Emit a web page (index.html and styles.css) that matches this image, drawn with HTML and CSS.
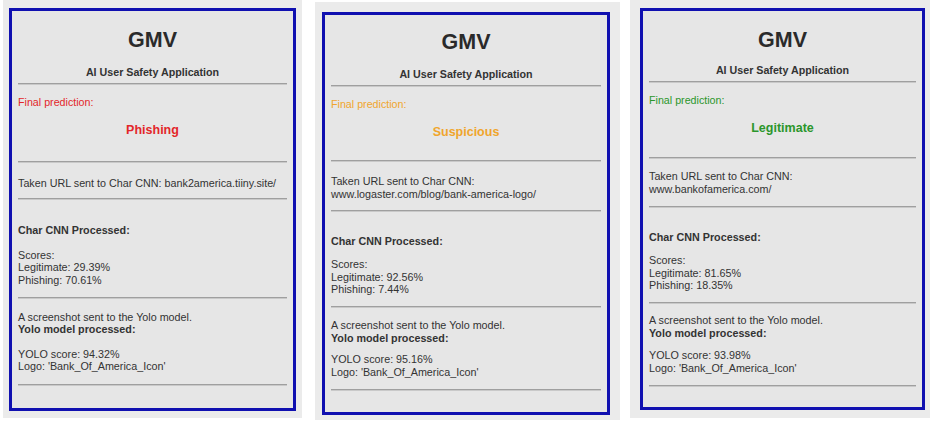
FILE: index.html
```html
<!DOCTYPE html>
<html lang="en">
<head>
<meta charset="utf-8">
<title>GMV - AI User Safety Application</title>
<link rel="stylesheet" href="styles.css">
</head>
<body>
<div class="strip">
  <section class="shot shot-1">
    <div class="card">
      <h1 class="title">GMV</h1>
      <h2 class="subtitle">AI User Safety Application</h2>
      <div class="rule"></div>
      <p class="label red">Final prediction:</p>
      <p class="verdict red">Phishing</p>
      <div class="rule rule-after-verdict"></div>
      <p class="text url">Taken URL sent to Char CNN: bank2america.tiiny.site/</p>
      <div class="rule rule-after-url"></div>
      <p class="text strong section-head">Char CNN Processed:</p>
      <p class="text scores">Scores:<br>Legitimate: 29.39%<br>Phishing: 70.61%</p>
      <div class="rule rule-after-scores"></div>
      <p class="text sent">A screenshot sent to the Yolo model.<br><b>Yolo model processed:</b></p>
      <p class="text yolo">YOLO score: 94.32%<br>Logo: 'Bank_Of_America_Icon'</p>
      <div class="rule rule-end"></div>
    </div>
  </section>

  <section class="shot shot-2">
    <div class="card">
      <h1 class="title">GMV</h1>
      <h2 class="subtitle">AI User Safety Application</h2>
      <div class="rule"></div>
      <p class="label orange">Final prediction:</p>
      <p class="verdict orange">Suspicious</p>
      <div class="rule rule-after-verdict"></div>
      <p class="text url">Taken URL sent to Char CNN:<br>www.logaster.com/blog/bank-america-logo/</p>
      <div class="rule rule-after-url"></div>
      <p class="text strong section-head">Char CNN Processed:</p>
      <p class="text scores">Scores:<br>Legitimate: 92.56%<br>Phishing: 7.44%</p>
      <div class="rule rule-after-scores"></div>
      <p class="text sent">A screenshot sent to the Yolo model.<br><b>Yolo model processed:</b></p>
      <p class="text yolo">YOLO score: 95.16%<br>Logo: 'Bank_Of_America_Icon'</p>
      <div class="rule rule-end"></div>
    </div>
  </section>

  <section class="shot shot-3">
    <div class="card">
      <h1 class="title">GMV</h1>
      <h2 class="subtitle">AI User Safety Application</h2>
      <div class="rule"></div>
      <p class="label green">Final prediction:</p>
      <p class="verdict green">Legitimate</p>
      <div class="rule rule-after-verdict"></div>
      <p class="text url">Taken URL sent to Char CNN:<br>www.bankofamerica.com/</p>
      <div class="rule rule-after-url"></div>
      <p class="text strong section-head">Char CNN Processed:</p>
      <p class="text scores">Scores:<br>Legitimate: 81.65%<br>Phishing: 18.35%</p>
      <div class="rule rule-after-scores"></div>
      <p class="text sent">A screenshot sent to the Yolo model.<br><b>Yolo model processed:</b></p>
      <p class="text yolo">YOLO score: 93.98%<br>Logo: 'Bank_Of_America_Icon'</p>
      <div class="rule rule-end"></div>
    </div>
  </section>
</div>
</body>
</html>
```

FILE: styles.css
```css
* {
  box-sizing: border-box;
}

html, body {
  margin: 0;
  padding: 0;
  background: #ffffff;
}

body {
  width: 936px;
  height: 427px;
  overflow: hidden;
  font-family: "Liberation Sans", Arial, Helvetica, sans-serif;
  color: #333333;
}

.strip {
  display: flex;
  align-items: flex-start;
}

.shot {
  background: #ebebeb;
  height: 418px;
  --title-top: 17px;
  --subtitle-top: 13px;
  --label-top: 11px;
  --verdict-top: 14px;
  --after-verdict: 23px;
  --url-top: 14px;
  --after-url: 8.5px;
  --head-top: 24px;
  --scores-top: 12px;
  --after-scores: 10.5px;
  --sent-top: 12px;
  --yolo-top: 12px;
  --end-top: 11px;
}

.shot-1 {
  margin-left: 3px;
  width: 299px;
  padding: 8px 0 0 6px;
}

.shot-2 {
  margin-left: 13px;
  margin-top: 2px;
  width: 305px;
  padding: 10px 0 0 7px;
  --title-top: 15px;
  --after-verdict: 20px;
  --url-top: 13px;
  --after-url: 9.5px;
  --head-top: 23px;
  --scores-top: 11px;
  --after-scores: 10.5px;
  --sent-top: 11px;
  --yolo-top: 9px;
  --end-top: 11px;
}

.shot-3 {
  margin-left: 10px;
  width: 300px;
  padding: 8px 0 0 10px;
  --subtitle-top: 11px;
  --after-verdict: 21px;
  --url-top: 11px;
  --after-url: 10.5px;
  --head-top: 23px;
  --scores-top: 11px;
  --after-scores: 10.5px;
  --sent-top: 10px;
  --yolo-top: 10px;
  --end-top: 11px;
}

.card {
  background: #e6e6e6;
  border: 3px solid #1010b0;
  padding: 0 6px;
  height: 403px;
}

.shot-1 .card { width: 287px; }
.shot-2 .card { width: 288px; height: 403px; }
.shot-3 .card { width: 285px; height: 402px; }

.title {
  margin: var(--title-top) 0 0;
  font-size: 21.5px;
  line-height: 25px;
  font-weight: bold;
  text-align: center;
  color: #2a2a2a;
}

.subtitle {
  margin: var(--subtitle-top) 0 0;
  font-size: 10.7px;
  line-height: 13px;
  font-weight: bold;
  text-align: center;
  color: #333333;
}

.rule {
  margin-top: 4px;
  height: 2px;
  border-top: 1px solid #9f9f9f;
  border-bottom: 1px solid #c9c9c9;
}

.label {
  margin: var(--label-top) 0 0;
  font-size: 10.7px;
  line-height: 13px;
}

.verdict {
  margin: var(--verdict-top) 0 0;
  font-size: 12.5px;
  line-height: 15px;
  font-weight: bold;
  text-align: center;
}

.red { color: #e3262a; }
.orange { color: #f0a52c; }
.green { color: #2b962b; }

.text {
  margin: 0;
  font-size: 10.75px;
  line-height: 12.5px;
  color: #333333;
}

.text b,
.strong {
  font-weight: bold;
}

.rule-after-verdict { margin-top: var(--after-verdict); }
.url { margin-top: var(--url-top); }
.rule-after-url { margin-top: var(--after-url); }
.section-head { margin-top: var(--head-top); }
.scores { margin-top: var(--scores-top); }
.rule-after-scores { margin-top: var(--after-scores); }
.sent { margin-top: var(--sent-top); }
.yolo { margin-top: var(--yolo-top); }
.rule-end { margin-top: var(--end-top); }
```
